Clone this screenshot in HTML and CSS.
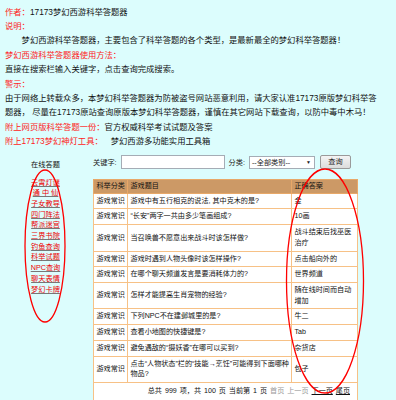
FILE: index.html
```html
<!DOCTYPE html>
<html lang="zh-CN">
<head>
<meta charset="utf-8">
<title>17173梦幻西游科举答题器</title>
<link rel="stylesheet" href="styles.css">
</head>
<body>
<div class="page">
  <div class="intro">
    <p><span class="lbl">作者：</span>17173梦幻西游科举答题器</p>
    <p class="lbl">说明：</p>
    <p class="indent">梦幻西游科举答题器，主要包含了科举答题的各个类型，是最新最全的梦幻科举答题器！</p>
    <p class="lbl">梦幻西游科举答题器使用方法：</p>
    <p>直接在搜索栏输入关键字，点击查询完成搜索。</p>
    <p class="lbl">警示：</p>
    <p>由于网络上转载众多，本梦幻科举答题器为防被盗号网站恶意利用，请大家认准17173原版梦幻科举答<br>题器， 尽量在17173原站查询原版本梦幻科举答题器，谨慎在其它网站下载查询，以防中毒中木马！</p>
    <p><span class="lbl">附上网页版科举答题一份：</span>官方权威科举考试试题及答案</p>
    <p><span class="lbl">附上17173梦幻神灯工具：</span><span class="gap">梦幻西游多功能实用工具箱</span></p>
  </div>
  <div class="tool">
    <aside class="side">
      <div class="side-title">在线答题</div>
      <ul class="side-list">
        <li><a href="#">云霄灯谜</a></li>
        <li><a href="#">通 中 仙</a></li>
        <li><a href="#">子女教导</a></li>
        <li><a href="#">四门阵法</a></li>
        <li><a href="#">帮派迷宫</a></li>
        <li><a href="#">三界书院</a></li>
        <li><a href="#">钓鱼查询</a></li>
        <li><a href="#">科举试题</a></li>
        <li><a href="#">NPC查询</a></li>
        <li><a href="#">聊天表情</a></li>
        <li><a href="#">梦幻卡牌</a></li>
      </ul>
    </aside>
    <main class="main">
      <div class="search">
        <span class="s-label">关键字:</span>
        <span class="s-input"></span>
        <span class="s-label s-cat">分类:</span>
        <span class="s-select"><span>--全部类别--</span><span class="arrow">▼</span></span>
        <span class="s-btn">查询</span>
      </div>
      <table class="qa">
        <colgroup><col class="c1"><col class="c2"><col class="c3"></colgroup>
        <thead>
          <tr><th>科举分类</th><th>游戏题目</th><th>正确答案</th></tr>
        </thead>
        <tbody>
          <tr><td>游戏常识</td><td>游戏中有五行相克的说法, 其中克木的是?</td><td>金</td></tr>
          <tr><td>游戏常识</td><td>“长安”两字一共由多少笔画组成?</td><td>10画</td></tr>
          <tr><td>游戏常识</td><td>当召唤兽不愿意出来战斗时该怎样做?</td><td>战斗结束后找巫医治疗</td></tr>
          <tr><td>游戏常识</td><td>游戏时遇到人物头像时该怎样操作?</td><td>点击船向外的</td></tr>
          <tr><td>游戏常识</td><td>在哪个聊天频道发言是要消耗体力的?</td><td>世界频道</td></tr>
          <tr><td>游戏常识</td><td>怎样才能提高生肖宠物的经验?</td><td>随在线时间而自动增加</td></tr>
          <tr><td>游戏常识</td><td>下列NPC不在建邺城里的是?</td><td>牛二</td></tr>
          <tr><td>游戏常识</td><td>查看小地图的快捷键是?</td><td>Tab</td></tr>
          <tr><td>游戏常识</td><td>避免遇敌的“摄妖香”在哪可以买到?</td><td>杂货店</td></tr>
          <tr><td>游戏常识</td><td>点击“人物状态”栏的“技能→烹饪”可能得到下面哪种物品?</td><td>包子</td></tr>
          <tr class="foot"><td colspan="3">总共 999 项，共 100 页 当前第 1 页 <span class="off">首页</span> <span class="off">上一页</span> <a href="#">下一页</a> <a href="#">尾页</a></td></tr>
        </tbody>
      </table>
    </main>
  </div>
</div>
<svg class="marks" width="396" height="400" viewBox="0 0 396 400" aria-hidden="true">
  <ellipse cx="45" cy="246" rx="20" ry="76" fill="none" stroke="#f00" stroke-width="1.3"/>
  <ellipse cx="325" cy="281" rx="38.5" ry="112" fill="none" stroke="#f00" stroke-width="1.3"/>
</svg>
</body>
</html>
```

FILE: styles.css
```css
html, body {
  margin: 0;
  background: #dcfdfd;
}
body {
  font-family: "Liberation Sans", "Noto Sans CJK SC", sans-serif;
  color: #111;
  position: relative;
  width: 396px;
  height: 400px;
  overflow: hidden;
}
.page {
  padding: 4.5px 5px 0;
}
.intro p {
  margin: 0;
  font-size: 8.3px;
  line-height: 14.4px;
  white-space: nowrap;
}
.lbl {
  color: #f22;
}
.indent {
  text-indent: 2em;
}
.gap {
  margin-left: 8px;
}
.tool {
  display: flex;
  margin-top: 6.5px;
  font-size: 7.2px;
}
.side {
  width: 81px;
  padding-right: 7px;
  padding-top: 3.5px;
  text-align: center;
}
.side-title {
  line-height: 11px;
  color: #111;
}
.side-list {
  list-style: none;
  margin: 8px 0 0;
  padding: 0;
}
.side-list li {
  line-height: 10.7px;
}
.side-list a {
  color: #e00;
  text-decoration: underline;
  text-decoration-color: #777;
}
.main {
  width: 264px;
}
.search {
  display: flex;
  align-items: center;
  height: 14px;
  margin-bottom: 10px;
  font-size: 7.2px;
  color: #222;
}
.s-input {
  width: 102px;
  height: 12px;
  margin-left: 4px;
  background: #fff;
  border: 1px solid #a5acb5;
}
.s-cat {
  margin-left: 4px;
}
.s-select {
  display: flex;
  justify-content: space-between;
  align-items: center;
  box-sizing: border-box;
  width: 66px;
  height: 13px;
  margin-left: 4px;
  padding: 0 3px 0 2px;
  background: #fff;
  border: 1px solid #a5acb5;
}
.arrow {
  font-size: 5px;
}
.s-btn {
  box-sizing: border-box;
  width: 31px;
  height: 14px;
  margin-left: 5px;
  line-height: 12px;
  text-align: center;
  background: linear-gradient(#f4f4f4, #dcdcdc);
  border: 1px solid #9a9a9a;
  border-radius: 2px;
}
.qa {
  width: 264px;
  table-layout: fixed;
  border-collapse: collapse;
  font-size: 7.1px;
  line-height: 10.7px;
  background: #fff;
}
.c1 { width: 34px; }
.c2 { width: 164px; }
.c3 { width: 66px; }
.qa th, .qa td {
  border: 1px solid #f7c186;
  padding: 2px 2px 2px 2.5px;
  text-align: left;
  vertical-align: middle;
  font-weight: normal;
}
.qa th {
  padding-top: 1px;
  padding-bottom: 1px;
  background: #cc9966;
  border-color: #e8a868;
  color: #111;
}
.foot td {
  text-align: right;
  padding: 3.5px 7px 3px 2px;
  word-spacing: 1px;
}
.off {
  color: #999;
}
.foot a {
  color: #111;
}
.marks {
  position: absolute;
  left: 0;
  top: 0;
  pointer-events: none;
}
```
